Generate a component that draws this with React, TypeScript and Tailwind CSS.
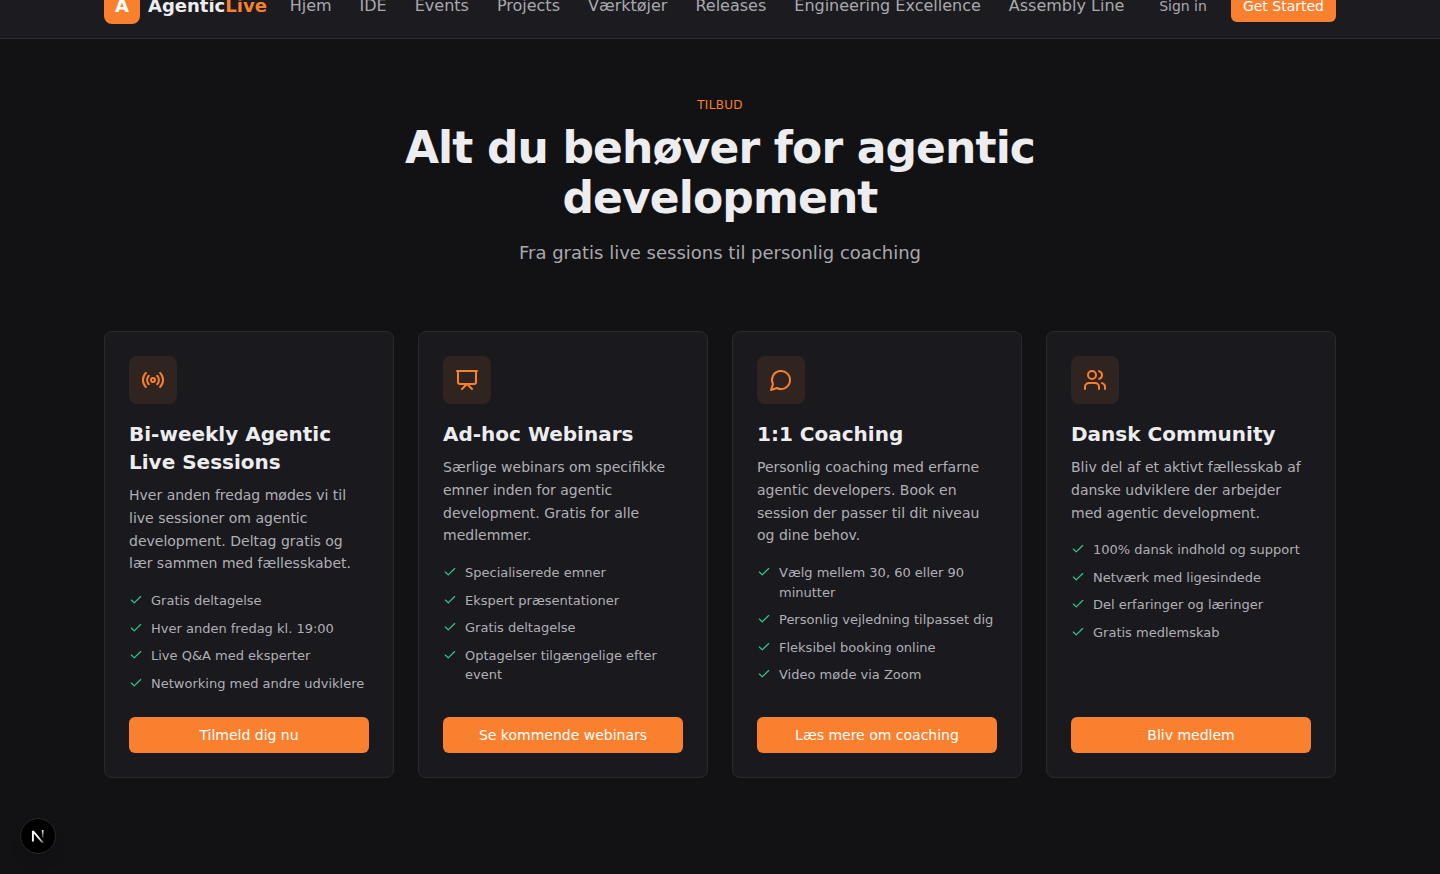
import type { ReactNode } from "react";
import { Check, Presentation, Users } from "lucide-react";

interface Offer {
  title: string;
  description: string;
  features: string[];
  cta: string;
  icon: ReactNode;
}

const navLinks = [
  "Hjem",
  "IDE",
  "Events",
  "Projects",
  "Værktøjer",
  "Releases",
  "Engineering Excellence",
  "Assembly Line",
];

function RadioIcon() {
  return (
    <svg
      viewBox="0 0 24 24"
      className="h-6 w-6"
      fill="none"
      stroke="currentColor"
      strokeWidth="2"
      strokeLinecap="round"
      strokeLinejoin="round"
      aria-hidden="true"
    >
      <path d="M4.9 19.1C1 15.2 1 8.8 4.9 4.9" />
      <path d="M7.8 16.2c-2.3-2.3-2.3-6.1 0-8.5" />
      <circle cx="12" cy="12" r="2" />
      <path d="M16.2 7.8c2.3 2.3 2.3 6.1 0 8.5" />
      <path d="M19.1 4.9C23 8.8 23 15.1 19.1 19" />
    </svg>
  );
}

function MessageIcon() {
  return (
    <svg
      viewBox="0 0 24 24"
      className="h-6 w-6"
      fill="none"
      stroke="currentColor"
      strokeWidth="2"
      strokeLinecap="round"
      strokeLinejoin="round"
      aria-hidden="true"
    >
      <path d="M7.9 20A9 9 0 1 0 4 16.1L2 22Z" />
    </svg>
  );
}

const offers: Offer[] = [
  {
    title: "Bi-weekly Agentic Live Sessions",
    description:
      "Hver anden fredag mødes vi til live sessioner om agentic development. Deltag gratis og lær sammen med fællesskabet.",
    features: [
      "Gratis deltagelse",
      "Hver anden fredag kl. 19:00",
      "Live Q&A med eksperter",
      "Networking med andre udviklere",
    ],
    cta: "Tilmeld dig nu",
    icon: <RadioIcon />,
  },
  {
    title: "Ad-hoc Webinars",
    description:
      "Særlige webinars om specifikke emner inden for agentic development. Gratis for alle medlemmer.",
    features: [
      "Specialiserede emner",
      "Ekspert præsentationer",
      "Gratis deltagelse",
      "Optagelser tilgængelige efter event",
    ],
    cta: "Se kommende webinars",
    icon: <Presentation className="h-6 w-6" />,
  },
  {
    title: "1:1 Coaching",
    description:
      "Personlig coaching med erfarne agentic developers. Book en session der passer til dit niveau og dine behov.",
    features: [
      "Vælg mellem 30, 60 eller 90 minutter",
      "Personlig vejledning tilpasset dig",
      "Fleksibel booking online",
      "Video møde via Zoom",
    ],
    cta: "Læs mere om coaching",
    icon: <MessageIcon />,
  },
  {
    title: "Dansk Community",
    description:
      "Bliv del af et aktivt fællesskab af danske udviklere der arbejder med agentic development.",
    features: [
      "100% dansk indhold og support",
      "Netværk med ligesindede",
      "Del erfaringer og læringer",
      "Gratis medlemskab",
    ],
    cta: "Bliv medlem",
    icon: <Users className="h-6 w-6" />,
  },
];

function Header() {
  return (
    <header className="-mt-[26px] border-b border-[#2e2e32] bg-[#1c1b20]">
      <div className="mx-auto flex h-16 max-w-7xl items-center justify-between px-6">
        <a href="#" className="flex items-center gap-2">
          <span className="flex h-9 w-9 items-center justify-center rounded-lg bg-[#f9802f] text-lg font-bold text-white">
            A
          </span>
          <span className="text-lg font-bold">
            Agentic<span className="text-[#f9802f]">Live</span>
          </span>
        </a>
        <nav className="flex items-center gap-7 whitespace-nowrap text-[#a9a9ad]">
          {navLinks.map((link) => (
            <a key={link} href="#">
              {link}
            </a>
          ))}
        </nav>
        <div className="flex items-center gap-3 whitespace-nowrap text-sm">
          <button type="button" className="h-8 px-3 text-[#a9a9ad]">
            Sign in
          </button>
          <button
            type="button"
            className="h-8 rounded-md bg-[#f9802f] px-3 text-white"
          >
            Get Started
          </button>
        </div>
      </div>
    </header>
  );
}

function OfferCard({ offer }: { offer: Offer }) {
  return (
    <article className="flex flex-col rounded-lg border border-[#2a2a2e] bg-[#1a191e] p-6">
      <div className="flex h-12 w-12 items-center justify-center rounded-lg bg-[#302420] text-[#f9802f]">
        {offer.icon}
      </div>
      <h3 className="mt-4 text-xl font-semibold">{offer.title}</h3>
      <p className="mt-2 text-sm leading-relaxed text-[#b0b0b4]">
        {offer.description}
      </p>
      <ul className="mt-4 mb-6 flex flex-col gap-2 text-[13px] leading-normal text-[#b0b0b4]">
        {offer.features.map((feature) => (
          <li key={feature} className="flex items-start gap-2">
            <Check className="mt-0.5 h-3.5 w-3.5 shrink-0 text-[#2fcb92]" />
            <span>{feature}</span>
          </li>
        ))}
      </ul>
      <button
        type="button"
        className="mt-auto h-9 w-full rounded-md bg-[#f9802f] text-sm text-white"
      >
        {offer.cta}
      </button>
    </article>
  );
}

function DevBadge() {
  return (
    <button
      type="button"
      aria-label="Open dev tools"
      className="fixed bottom-5 left-5 flex h-9 w-9 items-center justify-center rounded-full border border-[#2a2a2a] bg-black shadow-lg"
    >
      <svg viewBox="0 0 14 14" className="h-3.5 w-3.5" fill="none">
        <defs>
          <linearGradient id="stem" x1="11" y1="1" x2="11" y2="10" gradientUnits="userSpaceOnUse">
            <stop stopColor="#fff" />
            <stop offset="1" stopColor="#fff" stopOpacity="0" />
          </linearGradient>
          <linearGradient id="diagonal" x1="8" y1="8" x2="13" y2="14" gradientUnits="userSpaceOnUse">
            <stop stopColor="#fff" />
            <stop offset="1" stopColor="#fff" stopOpacity="0.3" />
          </linearGradient>
        </defs>
        <path d="M11.7 1v8.500" stroke="url(#stem)" strokeWidth="1.6" />
        <path
          d="M1.900 12.500V2L12 14"
          stroke="url(#diagonal)"
          strokeWidth="1.9"
          strokeLinejoin="bevel"
        />
      </svg>
    </button>
  );
}

export default function App() {
  return (
    <div className="flex min-h-screen flex-col bg-[#121214] font-['DejaVu_Sans',sans-serif] text-[#ededef]">
      <Header />
      <main className="mx-auto w-full max-w-7xl px-6 pt-14 pb-24">
        <div className="mx-auto mb-16 max-w-2xl text-center">
          <p className="text-xs leading-5 tracking-wide text-[#f9802f] uppercase">
            Tilbud
          </p>
          <h2 className="mt-2 text-[44px] leading-[50px] font-bold tracking-[-0.02em]">
            Alt du behøver for agentic development
          </h2>
          <p className="mt-4 text-lg text-[#a9a9ad]">
            Fra gratis live sessions til personlig coaching
          </p>
        </div>
        <div className="grid grid-cols-4 gap-6">
          {offers.map((offer) => (
            <OfferCard key={offer.title} offer={offer} />
          ))}
        </div>
      </main>
      <DevBadge />
    </div>
  );
}
